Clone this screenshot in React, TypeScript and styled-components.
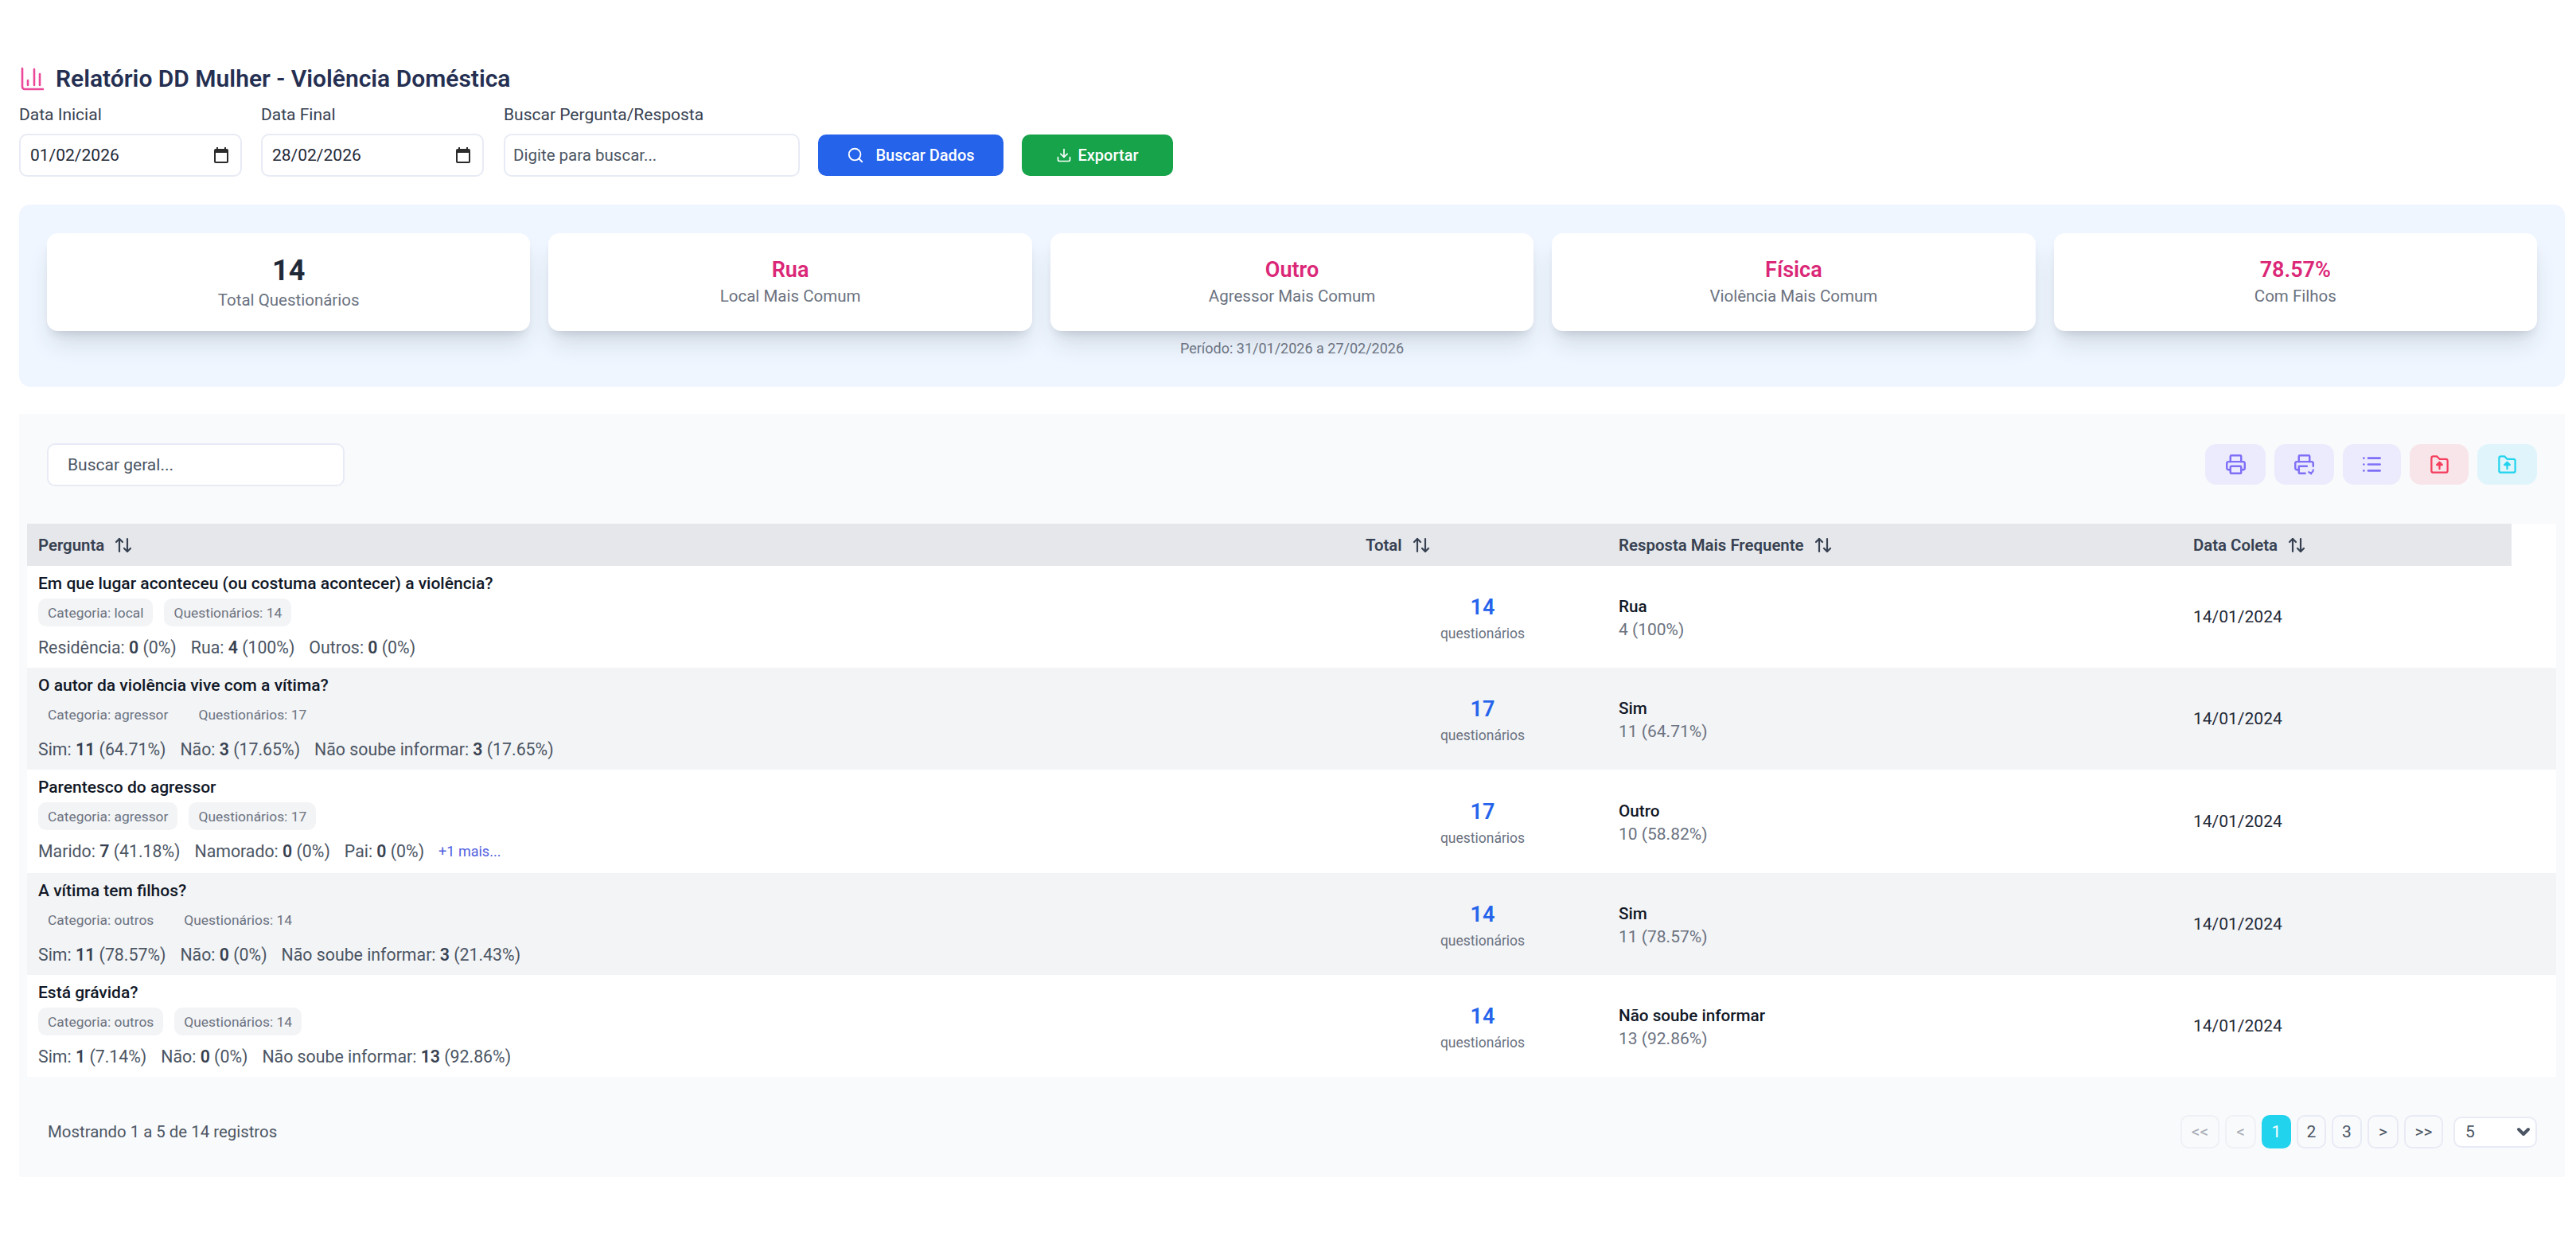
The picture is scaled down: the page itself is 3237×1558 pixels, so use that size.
import React from 'react';
import styled, { createGlobalStyle } from 'styled-components';
import { ArrowDownUp, ChevronDown, Download, List, Printer, Search } from 'lucide-react';

const GlobalStyle = createGlobalStyle`
  html, body {
    margin: 0;
    background: #fff;
    font-family: 'Roboto', 'Liberation Sans', sans-serif;
    color: #111827;
  }
`;

const Page = styled.div`
  width: 3237px;
  height: 1558px;
  padding: 84px 14px 0 24px;
  box-sizing: border-box;
  overflow: hidden;
`;

const TitleRow = styled.div`
  display: flex;
  align-items: center;
  gap: 15px;
  height: 30px;
`;

const Title = styled.h1`
  margin: 0;
  font-size: 30px;
  line-height: 30px;
  font-weight: 600;
  color: #252f52;
`;

const Filters = styled.div`
  display: flex;
  align-items: flex-end;
  margin-top: 24px;
  height: 84px;
`;

const Field = styled.label<{ $width: number; $gap: number }>`
  display: flex;
  flex-direction: column;
  width: ${(p) => p.$width}px;
  margin-right: ${(p) => p.$gap}px;
  position: relative;
`;

const FieldLabel = styled.span`
  font-size: 21px;
  line-height: 26px;
  color: #374151;
  margin-bottom: 11px;
`;

const TextInput = styled.input`
  height: 54px;
  box-sizing: border-box;
  width: 100%;
  border: 2px solid #e8ebf5;
  border-radius: 10px;
  padding: 0 12px;
  background: #fff;
  font: 400 21px 'Roboto', sans-serif;
  color: #1f2937;
  outline: none;
  &::placeholder {
    color: #4b5563;
    opacity: 1;
    font-size: 20.5px;
  }
  &:placeholder-shown {
    padding-left: 10px;
  }
`;

const CalendarIcon = styled.svg`
  position: absolute;
  right: 17px;
  bottom: 17px;
  width: 18px;
  height: 20px;
`;

const ActionButton = styled.button<{ $bg: string; $width: number; $after: number; $iconGap: number }>`
  display: flex;
  align-items: center;
  justify-content: center;
  gap: ${(p) => p.$iconGap}px;
  width: ${(p) => p.$width}px;
  height: 52px;
  margin: 0 ${(p) => p.$after}px 1px 0;
  border: none;
  border-radius: 10px;
  background: ${(p) => p.$bg};
  color: #fff;
  font: 500 20px 'Roboto', sans-serif;
`;

const SummaryPanel = styled.section`
  margin-top: 35px;
  height: 229px;
  box-sizing: border-box;
  padding: 36px 35px 0;
  background: #eff6ff;
  border-radius: 14px;
`;

const Cards = styled.div`
  display: grid;
  grid-template-columns: repeat(5, 1fr);
  gap: 23px;
`;

const Card = styled.div`
  height: 123px;
  display: flex;
  flex-direction: column;
  align-items: center;
  justify-content: center;
  background: #fff;
  border-radius: 14px;
  box-shadow: 0 20px 30px -6px rgba(30, 41, 59, 0.14), 0 8px 12px -6px rgba(30, 41, 59, 0.14);
`;

const CardValue = styled.div<{ $big?: boolean }>`
  font-size: ${(p) => (p.$big ? 36 : 27)}px;
  line-height: ${(p) => (p.$big ? 44 : 36)}px;
  font-weight: ${(p) => (p.$big ? 700 : 600)};
  color: ${(p) => (p.$big ? '#1f2937' : '#db2777')};
  margin-top: ${(p) => (p.$big ? 1 : -2)}px;
`;

const CardLabel = styled.div`
  font-size: 20.5px;
  line-height: 30px;
  color: #6b7280;
`;

const Period = styled.div`
  margin-top: 10px;
  text-align: center;
  font-size: 18px;
  line-height: 24px;
  color: #6b7280;
`;

const TableSection = styled.section`
  margin-top: 34px;
  height: 959px;
  box-sizing: border-box;
  padding: 38px 11px 0 10px;
  background: #f9fafb;
`;

const Toolbar = styled.div`
  display: flex;
  align-items: center;
  justify-content: space-between;
  padding: 0 24px 0 25px;
  height: 51px;
`;

const GeneralSearch = styled.input`
  width: 374px;
  height: 54px;
  box-sizing: border-box;
  border: 2px solid #e8ebf5;
  border-radius: 10px;
  padding: 0 24px;
  background: #fff;
  font: 400 21px 'Roboto', sans-serif;
  outline: none;
  &::placeholder {
    color: #4b5563;
    opacity: 1;
  }
`;

const ToolButtons = styled.div`
  display: flex;
  gap: 11px;
`;

const ToolButton = styled.button<{ $bg: string; $color: string; $width: number }>`
  width: ${(p) => p.$width}px;
  height: 51px;
  display: flex;
  align-items: center;
  justify-content: center;
  padding: 0;
  border: none;
  border-radius: 14px;
  background: ${(p) => p.$bg};
  color: ${(p) => p.$color};
`;

const Table = styled.div`
  margin-top: 49px;
  background: #fff;
`;

const HeaderRow = styled.div`
  display: grid;
  grid-template-columns: 1668px 318px 722px 414px;
  width: 3122px;
  height: 53px;
  background: #e5e7eb;
  align-items: center;
`;

const HeaderCell = styled.div`
  display: flex;
  align-items: center;
  gap: 12px;
  padding-left: 14px;
  font-size: 20.4px;
  font-weight: 600;
  color: #374151;
`;

const Row = styled.div<{ $striped: boolean; $height: number }>`
  display: grid;
  grid-template-columns: 1668px 318px 722px 414px 56px;
  height: ${(p) => p.$height}px;
  align-items: center;
  background: ${(p) => (p.$striped ? '#f3f4f6' : '#fff')};
`;

const QuestionCell = styled.div`
  align-self: start;
  padding: 8px 0 0 14px;
`;

const Question = styled.div`
  font-size: 21px;
  line-height: 28px;
  font-weight: 500;
  color: #111827;
`;

const Badges = styled.div`
  display: flex;
  gap: 14px;
  margin-top: 5px;
`;

const Badge = styled.span`
  display: flex;
  align-items: center;
  height: 35px;
  padding: 0 12px;
  border-radius: 10px;
  background: #f3f4f6;
  font-size: 17.4px;
  color: #6b7280;
`;

const Stats = styled.div`
  display: flex;
  align-items: center;
  gap: 18px;
  margin-top: 13px;
  font-size: 21.3px;
  line-height: 28px;
  color: #4b5563;
  strong {
    font-weight: 600;
    color: #374151;
  }
`;

const More = styled.span`
  font-size: 18px;
  color: #4f5fe0;
`;

const TotalCell = styled.div`
  padding: 6px 0 0 4px;
  text-align: center;
`;

const TotalValue = styled.div`
  font-size: 27px;
  line-height: 34px;
  font-weight: 600;
  color: #2563eb;
  margin-bottom: 2px;
`;

const TotalLabel = styled.div`
  font-size: 17.5px;
  line-height: 28px;
  color: #6b7280;
`;

const AnswerCell = styled.div`
  padding: 1px 0 0 14px;
`;

const AnswerName = styled.div`
  font-size: 20.7px;
  line-height: 30px;
  font-weight: 500;
  color: #111827;
`;

const AnswerCount = styled.div`
  font-size: 21px;
  line-height: 28px;
  color: #6b7280;
`;

const DateCell = styled.div`
  padding-left: 14px;
  font-size: 21px;
  color: #1f2937;
`;

const Footer = styled.div`
  display: flex;
  align-items: center;
  justify-content: space-between;
  margin-top: 48px;
  padding: 0 24px 0 26px;
`;

const ShowingText = styled.div`
  font-size: 20.4px;
  color: #4b5563;
`;

const Pager = styled.div`
  display: flex;
  align-items: center;
  gap: 7px;
`;

const PageButton = styled.button<{ $active?: boolean; $disabled?: boolean; $width: number }>`
  width: ${(p) => p.$width}px;
  height: 42px;
  padding: 0;
  box-sizing: border-box;
  border: 2px solid ${(p) => (p.$active ? '#22d3ee' : p.$disabled ? '#f0f1f6' : '#e8ebf5')};
  border-radius: 10px;
  background: ${(p) => (p.$active ? '#22d3ee' : 'transparent')};
  color: ${(p) => (p.$active ? '#fff' : p.$disabled ? '#a7acb6' : '#4b5563')};
  font: 400 21px 'Roboto', sans-serif;
`;

const SelectWrap = styled.div`
  position: relative;
  margin-left: 6px;
  width: 105px;
  height: 39px;
  svg {
    position: absolute;
    right: 5px;
    top: 7px;
    pointer-events: none;
  }
`;

const PageSize = styled.select`
  appearance: none;
  width: 100%;
  height: 100%;
  box-sizing: border-box;
  padding: 0 0 0 13px;
  border: 2px solid #e8ebf5;
  border-radius: 10px;
  background: #fff;
  font: 400 21px 'Roboto', sans-serif;
  color: #4b5563;
  outline: none;
`;

const rows = [
  {
    question: 'Em que lugar aconteceu (ou costuma acontecer) a violência?',
    categoria: 'local',
    total: 14,
    stats: [['Residência', '0', '0%'], ['Rua', '4', '100%'], ['Outros', '0', '0%']],
    answer: 'Rua',
    count: '4 (100%)',
    height: 128,
  },
  {
    question: 'O autor da violência vive com a vítima?',
    categoria: 'agressor',
    total: 17,
    stats: [['Sim', '11', '64.71%'], ['Não', '3', '17.65%'], ['Não soube informar', '3', '17.65%']],
    answer: 'Sim',
    count: '11 (64.71%)',
    height: 128,
  },
  {
    question: 'Parentesco do agressor',
    categoria: 'agressor',
    total: 17,
    stats: [['Marido', '7', '41.18%'], ['Namorado', '0', '0%'], ['Pai', '0', '0%']],
    more: '+1 mais...',
    answer: 'Outro',
    count: '10 (58.82%)',
    height: 130,
  },
  {
    question: 'A vítima tem filhos?',
    categoria: 'outros',
    total: 14,
    stats: [['Sim', '11', '78.57%'], ['Não', '0', '0%'], ['Não soube informar', '3', '21.43%']],
    answer: 'Sim',
    count: '11 (78.57%)',
    height: 128,
  },
  {
    question: 'Está grávida?',
    categoria: 'outros',
    total: 14,
    stats: [['Sim', '1', '7.14%'], ['Não', '0', '0%'], ['Não soube informar', '13', '92.86%']],
    answer: 'Não soube informar',
    count: '13 (92.86%)',
    height: 128,
  },
];

const cards = [
  { value: '14', label: 'Total Questionários', big: true },
  { value: 'Rua', label: 'Local Mais Comum' },
  { value: 'Outro', label: 'Agressor Mais Comum' },
  { value: 'Física', label: 'Violência Mais Comum' },
  { value: '78.57%', label: 'Com Filhos' },
];

const headers = ['Pergunta', 'Total', 'Resposta Mais Frequente', 'Data Coleta'];

const ChartIcon = () => (
  <svg width="31" height="30" viewBox="0 0 31 30" fill="none" stroke="#ec4899" strokeWidth="2.6" strokeLinecap="round">
    <path d="M4 2v23a3 3 0 0 0 3 3h23" />
    <path d="M11 17v6M19 3v20M26 9v14" />
  </svg>
);

const Calendar = () => (
  <CalendarIcon viewBox="0 0 18 20">
    <path
      fill="#2b2b2b"
      d="M3 0h2v2h8V0h2v2h1a2 2 0 0 1 2 2v14a2 2 0 0 1-2 2H2a2 2 0 0 1-2-2V4a2 2 0 0 1 2-2h1zM2 7v11h14V7z"
    />
  </CalendarIcon>
);

const FolderUpload = () => (
  <svg width="27" height="27" viewBox="0 0 24 24" fill="none" stroke="currentColor" strokeWidth="2" strokeLinejoin="round">
    <path d="M3 5a2 2 0 0 1 2-2h4l3 3h7a2 2 0 0 1 2 2v11a2 2 0 0 1-2 2H5a2 2 0 0 1-2-2z" />
    <path d="M12 17v-6" strokeLinecap="round" />
    <path d="M9 12.500 12 9.500l3 3z" fill="currentColor" />
  </svg>
);

const PrinterRefresh = () => (
  <svg width="27" height="27" viewBox="0 0 24 24" fill="none" stroke="currentColor" strokeWidth="2.2" strokeLinecap="round" strokeLinejoin="round">
    <path d="M6 9V3a1 1 0 0 1 1-1h10a1 1 0 0 1 1 1v6" />
    <path d="M6 18H4a2 2 0 0 1-2-2v-5a2 2 0 0 1 2-2h16a2 2 0 0 1 2 2v3" />
    <path d="M6 14h9M6 14v7a1 1 0 0 0 1 1h6" />
    <path d="M22 18a3 3 0 0 1-5 2.500M20 22.500l-3-2" strokeWidth="1.8" />
  </svg>
);

const SortIcon = () => <ArrowDownUp size={24} strokeWidth={2.2} color="#374151" style={{ transform: 'scaleX(-1)' }} />;

export default function App() {
  return (
    <>
      <GlobalStyle />
      <Page>
        <TitleRow>
          <ChartIcon />
          <Title>Relatório DD Mulher - Violência Doméstica</Title>
        </TitleRow>
        <Filters>
          <Field $width={280} $gap={24}>
            <FieldLabel>Data Inicial</FieldLabel>
            <TextInput readOnly value="01/02/2026" />
            <Calendar />
          </Field>
          <Field $width={280} $gap={25}>
            <FieldLabel>Data Final</FieldLabel>
            <TextInput readOnly value="28/02/2026" />
            <Calendar />
          </Field>
          <Field $width={372} $gap={23}>
            <FieldLabel>Buscar Pergunta/Resposta</FieldLabel>
            <TextInput placeholder="Digite para buscar..." />
          </Field>
          <ActionButton $bg="#2563eb" $width={233} $after={23} $iconGap={14}>
            <Search size={22} />
            Buscar Dados
          </ActionButton>
          <ActionButton $bg="#16a34a" $width={190} $after={0} $iconGap={7}>
            <Download size={20} />
            Exportar
          </ActionButton>
        </Filters>

        <SummaryPanel>
          <Cards>
            {cards.map((c) => (
              <Card key={c.label}>
                <CardValue $big={c.big}>{c.value}</CardValue>
                <CardLabel>{c.label}</CardLabel>
              </Card>
            ))}
          </Cards>
          <Period>Período: 31/01/2026 a 27/02/2026</Period>
        </SummaryPanel>

        <TableSection>
          <Toolbar>
            <GeneralSearch placeholder="Buscar geral..." />
            <ToolButtons>
              <ToolButton $bg="#ebebfd" $color="#7f6ff7" $width={76}>
                <Printer size={27} strokeWidth={2.2} />
              </ToolButton>
              <ToolButton $bg="#ebebfd" $color="#7f6ff7" $width={75}>
                <PrinterRefresh />
              </ToolButton>
              <ToolButton $bg="#ebebfd" $color="#7f6ff7" $width={73}>
                <List size={27} strokeWidth={2.4} />
              </ToolButton>
              <ToolButton $bg="#f8e5e9" $color="#f43f5e" $width={74}>
                <FolderUpload />
              </ToolButton>
              <ToolButton $bg="#e0f5fb" $color="#22d3ee" $width={75}>
                <FolderUpload />
              </ToolButton>
            </ToolButtons>
          </Toolbar>

          <Table>
            <HeaderRow>
              {headers.map((h) => (
                <HeaderCell key={h}>
                  {h}
                  <SortIcon />
                </HeaderCell>
              ))}
            </HeaderRow>
            {rows.map((r, i) => (
              <Row key={r.question} $striped={i % 2 === 1} $height={r.height}>
                <QuestionCell>
                  <Question>{r.question}</Question>
                  <Badges>
                    <Badge>Categoria: {r.categoria}</Badge>
                    <Badge>Questionários: {r.total}</Badge>
                  </Badges>
                  <Stats>
                    {r.stats.map(([name, n, pct]) => (
                      <span key={name}>
                        {name}: <strong>{n}</strong> ({pct})
                      </span>
                    ))}
                    {r.more && <More>{r.more}</More>}
                  </Stats>
                </QuestionCell>
                <TotalCell>
                  <TotalValue>{r.total}</TotalValue>
                  <TotalLabel>questionários</TotalLabel>
                </TotalCell>
                <AnswerCell>
                  <AnswerName>{r.answer}</AnswerName>
                  <AnswerCount>{r.count}</AnswerCount>
                </AnswerCell>
                <DateCell>14/01/2024</DateCell>
              </Row>
            ))}
          </Table>

          <Footer>
            <ShowingText>Mostrando 1 a 5 de 14 registros</ShowingText>
            <Pager>
              <PageButton $disabled $width={49}>{'<<'}</PageButton>
              <PageButton $disabled $width={39}>{'<'}</PageButton>
              <PageButton $active $width={37}>1</PageButton>
              <PageButton $width={37}>2</PageButton>
              <PageButton $width={38}>3</PageButton>
              <PageButton $width={39}>{'>'}</PageButton>
              <PageButton $width={49}>{'>>'}</PageButton>
              <SelectWrap>
                <PageSize defaultValue="5">
                  <option>5</option>
                  <option>10</option>
                  <option>25</option>
                </PageSize>
                <ChevronDown size={24} strokeWidth={4} color="#4b5563" />
              </SelectWrap>
            </Pager>
          </Footer>
        </TableSection>
      </Page>
    </>
  );
}
